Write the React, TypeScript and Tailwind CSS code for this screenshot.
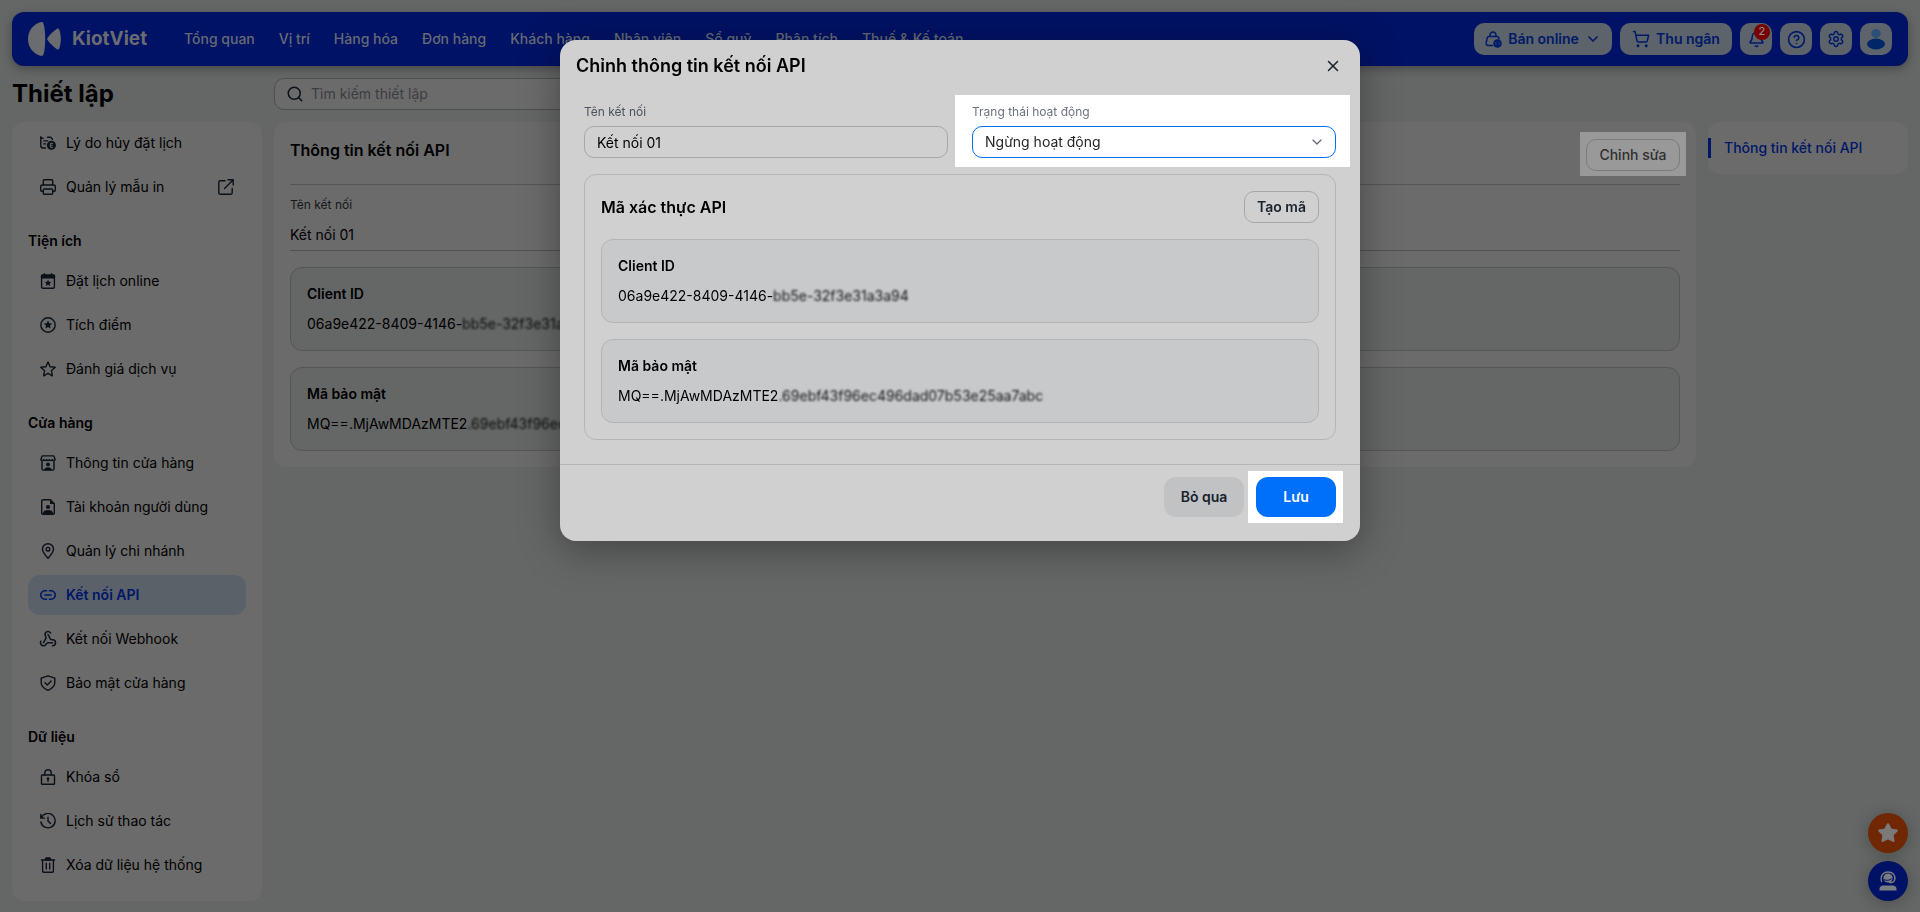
import type { ReactNode } from "react";
import { Bell, ChevronDown, CircleHelp, Search, Settings, ShoppingCart, Star, Webhook, X } from "lucide-react";

const STAR = "M8 0l2.3 5 5.5.6-4.1 3.7 1.2 5.4L8 12l-4.9 2.7 1.2-5.4L.2 5.6 5.7 5z";

function Svg({ children }: { children: ReactNode }) {
  return (
    <svg viewBox="0 0 16 16" className="size-4 shrink-0" fill="none" stroke="currentColor" strokeWidth="1.4" strokeLinecap="round" strokeLinejoin="round" aria-hidden="true">
      {children}
    </svg>
  );
}

const CancelIcon = () => (
  <Svg>
    <path d="M.8 1.8v8.700c0 1.600.8 2.500 2.200 2.500h2.500" />
    <path d="M.8 3.200h2.400M7.500 2.300h3.200l1.800 2M3.800 5.900h3.700M3.800 8.900h1.800" />
    <circle cx="11.400" cy="10.300" r="4.500" fill="currentColor" stroke="none" />
    <path d="M12.700 8.300h-2.400v4h2.400M10.300 10.300h2" stroke="#6b6b6b" strokeWidth="1" />
  </Svg>
);

const PrinterIcon = () => (
  <Svg>
    <path d="M3.300 6V1.700c0-.5.400-.9.900-.9h7.600c.5 0 .9.400.9.900V6" />
    <path d="M3.300 12.200H1.700c-.6 0-1-.4-1-1V7.400c0-.8.600-1.400 1.400-1.400h11.800c.8 0 1.400.6 1.400 1.400v3.800c0 .6-.4 1-1 1h-1.600" />
    <rect x="3.300" y="10" width="9.400" height="5.200" rx=".9" />
  </Svg>
);

const ExternalIcon = () => (
  <Svg>
    <path d="M7 1.800H2.200C1.400 1.800.8 2.400.8 3.200v10.600c0 .8.600 1.400 1.400 1.400h10.600c.8 0 1.400-.6 1.400-1.400V9.500M10 .8h5.200V6M15 1L6.500 9.500" />
  </Svg>
);

const CalendarStarIcon = () => (
  <Svg>
    <rect x="1.600" y="2.200" width="12.800" height="13" rx="1.200" />
    <path d="M1.600 2.200h12.800v2.600H1.600z" fill="currentColor" />
    <path d="M4.400.7v1.600M11.600.7v1.600" />
    <path d={STAR} transform="translate(4.600 6.700) scale(.43)" fill="currentColor" stroke="none" />
  </Svg>
);

const CircleStarIcon = () => (
  <Svg>
    <circle cx="8" cy="8" r="7.200" />
    <path d={STAR} transform="translate(3.700 3.600) scale(.54)" fill="currentColor" stroke="none" />
  </Svg>
);

const StarIcon = () => (
  <Svg>
    <path d="M8 1l2.100 4.700 5.100.6-3.800 3.500 1 5L8 12.300l-4.400 2.500 1-5L.8 6.300l5.100-.6z" />
  </Svg>
);

const ShopIcon = () => (
  <Svg>
    <path d="M2.200.9h11.600l1.400 3.600c0 1.300-2.900 1.300-2.900 0 0 1.300-2.900 1.300-2.900 0 0 1.300-2.800 1.300-2.800 0 0 1.300-2.900 1.300-2.900 0 0 1.300-2.900 1.300-2.900 0zM2 6.500V14c0 .7.400 1.100 1.100 1.100h9.800c.7 0 1.100-.4 1.100-1.100V6.500" />
    <circle cx="8" cy="9.400" r="1.900" fill="currentColor" stroke="none" />
    <path d="M4 15.200c.5-2.200 2-3 4-3s3.500.8 4 3z" fill="currentColor" stroke="none" />
  </Svg>
);

const AccountIcon = () => (
  <Svg>
    <path d="M2.900.8h7.500l3.900 3.900v9.300c0 .8-.4 1.200-1.200 1.200H2.900c-.8 0-1.200-.4-1.200-1.200V2c0-.8.400-1.200 1.200-1.200z" />
    <path d="M10 .8l4.300 4.300H10z" fill="currentColor" stroke="none" />
    <circle cx="8" cy="8" r="2.100" fill="currentColor" stroke="none" />
    <path d="M2.600 15c.6-2.900 2.700-3.900 5.400-3.900s4.800 1 5.400 3.900z" fill="currentColor" stroke="none" />
  </Svg>
);

const PinIcon = () => (
  <Svg>
    <path d="M8 15.300C5 12 2.500 9 2.500 6.200a5.500 5.500 0 0 1 11 0C13.500 9 11 12 8 15.300z" />
    <circle cx="8" cy="6.200" r="1.800" />
  </Svg>
);

const LinkIcon = () => (
  <Svg>
    <path d="M6.500 3.800H5a4.200 4.200 0 0 0 0 8.400h1.500M9.500 3.800H11a4.200 4.200 0 0 1 0 8.400H9.500M5 8h6" strokeWidth="1.600" />
  </Svg>
);

const ShieldIcon = () => (
  <Svg>
    <path d="M8 .8l6.800 2.400v4.300c0 3.600-2.700 6.200-6.800 7.800C3.900 13.700 1.200 11.100 1.200 7.500V3.200z" />
    <path d="M5 7.800L7.200 10 11.200 6" />
  </Svg>
);

const LockIcon = () => (
  <Svg>
    <rect x="1.500" y="6" width="13" height="9.200" rx=".8" />
    <path d="M4.800 6V3.800C4.800 2 6.200.8 8 .8s3.200 1.200 3.200 3V6" />
    <circle cx="8" cy="9.700" r="1.400" fill="currentColor" stroke="none" />
    <path d="M8 10v2.300" />
  </Svg>
);

const HistoryIcon = () => (
  <Svg>
    <path d="M1.300 4.900A7.200 7.200 0 1 1 .9 9M.8 1.500v3.600h3.700M8 4.200V8l2.500 2.600" />
  </Svg>
);

const TrashIcon = () => (
  <Svg>
    <path d="M1.400 3h13.200M2.600 3v11.200c0 .7.400 1 1 1h8.800c.6 0 1-.3 1-1V3M6.300 6.300v5.700M9.700 6.300v5.700" />
    <path d="M5.200 2.800L6 .9h4l.8 1.900z" fill="currentColor" />
  </Svg>
);

const BagIcon = () => (
  <svg viewBox="0 0 17 17" className="size-[17px] shrink-0" fill="none" stroke="currentColor" strokeWidth="1.500" strokeLinecap="round" strokeLinejoin="round" aria-hidden="true">
    <path d="M7.500 14.500H3.200c-1.500 0-2.300-1-2-2.400l1-5.200c.2-1 .8-1.500 1.700-1.500h8.200c.9 0 1.500.5 1.700 1.500l.2 1M4.800 5.200C5 2.500 6 1 8 1s3 1.500 3.200 4.200" />
    <circle cx="12.500" cy="12.500" r="4.300" fill="currentColor" stroke="none" />
    <path d="M11.200 11.200L10 12.500l1.200 1.300M13.800 11.200l1.200 1.300-1.200 1.300" stroke="#5c636b" strokeWidth=".6" />
  </svg>
);

type Item = { label: string; icon: ReactNode; active?: boolean; external?: boolean };

const groups: { title?: string; items: Item[] }[] = [
  {
    items: [
      { label: "Lý do hủy đặt lịch", icon: <CancelIcon /> },
      { label: "Quản lý mẫu in", icon: <PrinterIcon />, external: true },
    ],
  },
  {
    title: "Tiện ích",
    items: [
      { label: "Đặt lịch online", icon: <CalendarStarIcon /> },
      { label: "Tích điểm", icon: <CircleStarIcon /> },
      { label: "Đánh giá dịch vụ", icon: <StarIcon /> },
    ],
  },
  {
    title: "Cửa hàng",
    items: [
      { label: "Thông tin cửa hàng", icon: <ShopIcon /> },
      { label: "Tài khoản người dùng", icon: <AccountIcon /> },
      { label: "Quản lý chi nhánh", icon: <PinIcon /> },
      { label: "Kết nối API", icon: <LinkIcon />, active: true },
      { label: "Kết nối Webhook", icon: <Webhook size={18} className="-m-px" /> },
      { label: "Bảo mật cửa hàng", icon: <ShieldIcon /> },
    ],
  },
  {
    title: "Dữ liệu",
    items: [
      { label: "Khóa sổ", icon: <LockIcon /> },
      { label: "Lịch sử thao tác", icon: <HistoryIcon /> },
      { label: "Xóa dữ liệu hệ thống", icon: <TrashIcon /> },
    ],
  },
];

const menu = ["Tổng quan", "Vị trí", "Hàng hóa", "Đơn hàng", "Khách hàng", "Nhân viên", "Sổ quỹ", "Phân tích", "Thuế & Kế toán"];

const credentials = [
  { title: "Client ID", shown: "06a9e422-8409-4146-", hidden: "bb5e-32f3e31a3a94" },
  { title: "Mã bảo mật", shown: "MQ==.MjAwMDAzMTE2", hidden: ".69ebf43f96ec496dad07b53e25aa7abc" },
];

function Credential({ title, shown, hidden, dimmed }: { title: string; shown: string; hidden: string; dimmed?: boolean }) {
  return (
    <div className={`mt-4 overflow-hidden rounded-xl border p-4 text-sm leading-5 whitespace-nowrap ${dimmed ? "border-[#545655] bg-[#656766]" : "border-[#b2b4b6] bg-[#c7c9cb]"}`}>
      <h3 className="font-semibold">{title}</h3>
      <p className="mt-[10px]">
        {shown}
        <span className="opacity-90 blur-[1px]">{hidden}</span>
      </p>
    </div>
  );
}

function Header() {
  const square = "relative flex size-8 items-center justify-center rounded-[10px] bg-[#5c636b]";
  return (
    <header className="flex h-[54px] items-center justify-between rounded-xl bg-[#001265] pr-4 pl-[15px] text-sm shadow-[0_3px_10px_rgba(0,0,0,0.3)]">
      <div className="flex items-center">
        <a href="#home" className="flex items-center gap-[11px] text-[#6a6c70]">
          <svg viewBox="0 0 34 36" className="h-9 w-[34px]" fill="currentColor" aria-hidden="true">
            <path d="M14.500 1c1 0 1.500.5 1.900 1.400 2.400 7 2.400 24.200 0 31.200-.4 1-1 1.400-1.900 1.400C7 33.500 1 27 1 18S7 2.500 14.500 1z" />
            <path d="M29.500 8c1.300-1 2.300-.6 2.800.8 2 5.400 2 13 0 18.400-.5 1.400-1.500 1.800-2.800.8-3.400-2.600-6.400-5.400-8.800-8.700-.7-1-.7-1.600 0-2.600 2.400-3.300 5.400-6.100 8.800-8.700z" />
          </svg>
          <span className="w-[76px] text-[19px] font-bold">KiotViet</span>
        </a>
        <nav className="ml-9 flex gap-6 font-medium whitespace-nowrap text-[#666b73]">
          {menu.map((m) => (
            <a key={m} href="#menu">{m}</a>
          ))}
        </nav>
      </div>
      <div className="flex items-center gap-2 font-semibold text-[#001a68]">
        <button className="flex h-8 w-[138px] items-center justify-center gap-[6px] rounded-[10px] bg-[#5c636b]">
          <BagIcon />
          Bán online
          <ChevronDown size={16} strokeWidth={2.500} />
        </button>
        <button className="flex h-8 w-28 items-center justify-center gap-[6px] rounded-[10px] bg-[#5c636b]">
          <ShoppingCart size={18} />
          Thu ngân
        </button>
        <button className={square} aria-label="Thông báo">
          <Bell size={17} strokeWidth={2.200} />
          <span className="absolute top-[1px] right-[2px] flex size-4 items-center justify-center rounded-full bg-[#780000] text-[11px] font-medium text-[#8c8c8c]">2</span>
        </button>
        <button className={square} aria-label="Trợ giúp">
          <CircleHelp size={19} />
        </button>
        <button className={square} aria-label="Cài đặt">
          <Settings size={18} />
        </button>
        <button className={square} aria-label="Tài khoản">
          <svg viewBox="0 0 20 22" className="h-[22px] w-5" aria-hidden="true">
            <circle cx="10" cy="5.500" r="4.600" fill="#2c4f78" />
            <ellipse cx="10" cy="16" rx="9" ry="5.400" fill="#002767" />
          </svg>
        </button>
      </div>
    </header>
  );
}

function Sidebar() {
  return (
    <aside className="w-[250px] shrink-0 rounded-xl bg-[#6b6b6b] px-4 pt-px pb-4 text-sm leading-5">
      {groups.map((g, i) => (
        <section key={i} className={g.title ? "mt-6" : ""}>
          {g.title && <h2 className="mb-[10px] font-semibold">{g.title}</h2>}
          <ul className="flex flex-col gap-1">
            {g.items.map((it) => (
              <li key={it.label}>
                <a
                  href="#setting"
                  className={`flex h-10 items-center rounded-xl px-3 ${it.active ? "bg-[#5b6169] font-semibold text-[#001668]" : ""}`}
                >
                  <span className={it.active ? "" : "text-[#0a1118]"}>{it.icon}</span>
                  <span className="ml-[10px]">{it.label}</span>
                  {it.external && (
                    <span className="ml-auto text-[#0a1118]">
                      <ExternalIcon />
                    </span>
                  )}
                </a>
              </li>
            ))}
          </ul>
        </section>
      ))}
    </aside>
  );
}

function Content() {
  return (
    <main className="min-w-0 flex-1 self-start rounded-xl bg-[#6b6b6b] p-4">
      <div className="flex items-start justify-between border-b border-[#545556] pb-2">
        <h2 className="text-base font-semibold">Thông tin kết nối API</h2>
        <div className="-mx-[6px] -mt-[6px] bg-[#999999] px-[6px] pt-[7px] pb-[5px]">
          <button className="h-8 w-[94px] rounded-[10px] border border-[#7c7c7c] text-sm font-medium text-[#303030]">Chỉnh sửa</button>
        </div>
      </div>
      <div className="border-b border-[#505152] pt-[10px] pb-[5px]">
        <p className="text-xs leading-5 text-[#14181c]">Tên kết nối</p>
        <p className="mt-[10px] text-sm leading-5">Kết nối 01</p>
      </div>
      {credentials.map((c) => (
        <Credential key={c.title} {...c} dimmed />
      ))}
    </main>
  );
}

function EditDialog() {
  return (
    <div className="fixed inset-0 flex items-start justify-center px-4 pt-10">
      <div role="dialog" aria-labelledby="dialog-title" className="w-full max-w-[800px] rounded-2xl bg-[#d0d0d0] shadow-[0_8px_40px_rgba(0,0,0,0.35)]">
        <div className="flex h-[52px] items-center justify-between pr-[15px] pl-4">
          <h1 id="dialog-title" className="text-lg font-semibold">Chỉnh thông tin kết nối API</h1>
          <button className="flex size-6 items-center justify-center text-[#18222c]" aria-label="Đóng">
            <X size={18} />
          </button>
        </div>
        <div className="px-6 pt-[10px] pb-6">
          <div className="grid grid-cols-2 gap-6">
            <div>
              <label htmlFor="name" className="block text-xs leading-5 text-[#4a525e]">Tên kết nối</label>
              <input id="name" defaultValue="Kết nối 01" className="mt-1 block h-8 w-full rounded-[10px] border border-[#a6a7ac] px-3 text-sm outline-none" />
            </div>
            <div className="-mt-[7px] -mr-[14px] -mb-[9px] -ml-[17px] bg-white pt-[7px] pr-[14px] pb-[9px] pl-[17px]">
              <label htmlFor="status" className="block text-xs leading-5 text-[#6b7280]">Trạng thái hoạt động</label>
              <div className="relative mt-1">
                <select id="status" className="block h-8 w-full appearance-none rounded-[10px] border border-[#0070f4] bg-white px-3 text-sm text-[#262626] outline-none">
                  <option>Ngừng hoạt động</option>
                  <option>Đang hoạt động</option>
                </select>
                <ChevronDown size={16} strokeWidth={1.800} className="pointer-events-none absolute top-2 right-[11px] text-[#5b6673]" />
              </div>
            </div>
          </div>
          <section className="mt-4 rounded-xl border border-[#b4b5b8] p-4">
            <div className="flex items-center justify-between">
              <h2 className="text-base font-semibold">Mã xác thực API</h2>
              <button className="h-8 rounded-[10px] border border-[#a6a7ac] px-3 text-sm font-semibold text-[#18222c]">Tạo mã</button>
            </div>
            {credentials.map((c) => (
              <Credential key={c.title} {...c} />
            ))}
          </section>
        </div>
        <div className="flex items-center justify-end gap-3 border-t border-[#b4b5ba] px-6 pt-3 pb-6 text-sm font-semibold">
          <button className="h-10 w-20 rounded-xl bg-[#c0c2c4] text-[#18222c]">Bỏ qua</button>
          <div className="-my-[6px] -mr-[7px] -ml-2 bg-white py-[6px] pr-[7px] pl-2">
            <button className="block h-10 w-20 rounded-xl bg-[#0070fa] text-white">Lưu</button>
          </div>
        </div>
      </div>
    </div>
  );
}

export default function App() {
  return (
    <div className="min-h-screen bg-[#656766] px-3 pt-3 pb-[11px] font-['Inter',sans-serif] text-black">
      <Header />
      <div className="mt-3 flex items-center gap-3">
        <h1 className="w-[250px] shrink-0 text-2xl leading-8 font-bold">Thiết lập</h1>
        <label className="flex h-8 w-full max-w-[720px] items-center gap-[7px] rounded-[10px] border border-[#4c4f52] bg-[#6b6b6b] px-[11px]">
          <Search size={18} className="text-[#0a1118]" />
          <input placeholder="Tìm kiếm thiết lập" aria-label="Tìm kiếm thiết lập" className="flex-1 bg-transparent text-sm outline-none placeholder:text-[#3a3e43]" />
        </label>
      </div>
      <div className="mt-3 flex gap-3">
        <Sidebar />
        <Content />
        <nav className="w-[200px] shrink-0 self-start rounded-xl bg-[#6b6b6b] py-4 text-sm leading-5 font-medium">
          <a href="#api" className="block border-l-[3px] border-[#001668] pl-[13px] text-[#001668]">Thông tin kết nối API</a>
        </nav>
      </div>
      <div className="fixed right-3 bottom-[11px] flex flex-col gap-2">
        <button className="flex size-10 items-center justify-center rounded-full bg-[#702703] text-[#7a7a7a] shadow-[0_2px_16px_rgba(0,0,0,0.25)]" aria-label="Đánh giá">
          <Star size={22} fill="currentColor" strokeWidth={1.500} />
        </button>
        <button className="flex size-10 items-center justify-center rounded-full bg-[#001265] text-[#7a7d82] shadow-[0_2px_16px_rgba(0,0,0,0.25)]" aria-label="Hỗ trợ">
          <svg viewBox="0 0 20 22" className="h-[22px] w-5" fill="none" stroke="currentColor" strokeWidth="1.300" strokeLinecap="round" aria-hidden="true">
            <path d="M3.500 11.500C2 6 5 2 10 2s8.200 4 6.500 8.500c-.8 1.700-2.500 2.200-5 2.200" />
            <circle cx="10" cy="8" r="4.600" fill="currentColor" stroke="none" />
            <path d="M6.300 9.800c2.300 1 5 .6 7-.8" stroke="#001265" strokeWidth="1" />
            <path d="M1.500 20.500v-1.400c0-2.400 1.500-3.600 3.800-3.600h9.400c2.300 0 3.800 1.200 3.800 3.600v1.400z" fill="currentColor" stroke="none" />
          </svg>
        </button>
      </div>
      <EditDialog />
    </div>
  );
}
